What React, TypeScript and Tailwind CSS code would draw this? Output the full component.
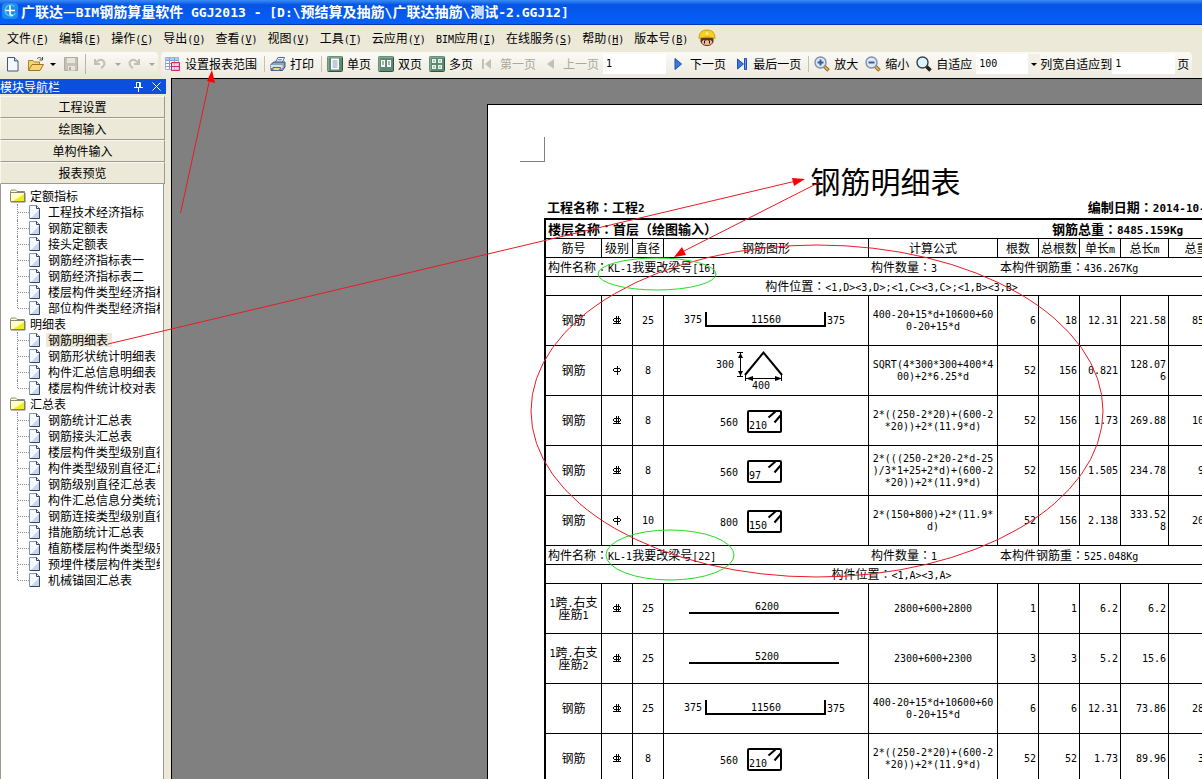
import React from 'react';

const LATIN = {
  sm: 'font-["DejaVu_Sans_Mono",monospace] text-[10px] leading-[0]',
  md: 'font-["DejaVu_Sans_Mono",monospace] text-[11px] leading-[0]',
  lg: 'font-["DejaVu_Sans_Mono",monospace] text-[13px] leading-[0]',
};

// Half-width runs are set in a mono face so two of them take one CJK cell
const Mixed: React.FC<{ text: string; size?: keyof typeof LATIN }> = ({ text, size = 'sm' }) => (
  <>
    {text.split(/([\x20-\x7e]+|：)/).map((part, i) => {
      if (!part) return null;
      if (part === '：') {
        return <span key={i} className='font-["Noto_Sans_CJK_TC",sans-serif]'>{part}</span>;
      }
      return /^[\x20-\x7e]+$/.test(part) ? (
        <span key={i} className={LATIN[size]}>{part}</span>
      ) : (
        part
      );
    })}
  </>
);

/* ---------- icons ---------- */

const AppIcon = () => (
  <svg width="16" height="16" viewBox="0 0 16 16" fill="none">
    <rect width="16" height="16" rx="4" fill="#1e8ce8" />
    <path d="M12.500 3.500A5.500 5.500 0 1 0 13.500 10" stroke="#5cc4f8" strokeWidth="1.400" />
    <path d="M8 2.500v8c0 1.500 1 2 3 2M3.500 7.500h9.500" stroke="#fff" strokeWidth="1.600" />
  </svg>
);

const NewIcon = () => (
  <svg width="16" height="16" viewBox="0 0 16 16">
    <path d="M2.500 1.500h7l3.500 3.500v10H2.500z" fill="#f4f8ff" stroke="#3f5878" />
    <path d="M9.500 1.500V5H13" fill="#c8d8ec" stroke="#3f5878" />
  </svg>
);

const OpenIcon = () => (
  <svg width="16" height="16" viewBox="0 0 16 16">
    <path d="M.5 14V4.500h4.500l1.500 1.500h5v3" fill="#f6d673" stroke="#a8822e" />
    <path d="M.5 14.500 4 8.500h11.500L12 14.500z" fill="#fbd670" stroke="#9a7428" />
    <path d="M9 3c1.500-2 3.500-2 4.500 0M14.500 1v3h-3" fill="none" stroke="#444" />
  </svg>
);

const SaveIcon = () => (
  <svg width="16" height="16" viewBox="0 0 16 16">
    <path d="M1.500 1.500h13v13h-13z" fill="#c6c3b6" stroke="#aeaba0" />
    <path d="M4 2h8v5H4z" fill="#e8e6dc" />
    <path d="M5 10h7v4.500H5z" fill="#e8e6dc" />
    <path d="M6 11h2v3H6z" fill="#aeaba0" />
  </svg>
);

const UndoIcon: React.FC<{ flip?: boolean }> = ({ flip }) => (
  <svg width="16" height="16" viewBox="0 0 16 16" fill="none" className={flip ? '-scale-x-100' : ''}>
    <path d="M3 3v5h5M3.500 7.500C6 3.500 9 3 11 4.500c2.500 2 1.500 6-2 7.500" stroke="#c2bfb3" strokeWidth="2" />
  </svg>
);

const Caret: React.FC<{ muted?: boolean }> = ({ muted }) => (
  <svg width="12" height="12" viewBox="0 0 12 12">
    <path d="M3 5h6L6 8z" fill={muted ? '#a8a598' : '#000'} />
  </svg>
);

const RangeIcon = () => (
  <svg width="16" height="16" viewBox="0 0 16 16">
    <path d="M.5 1.500h13v12H.5z" fill="#fff" stroke="#a4b0dc" />
    <path d="M1 2h12v2H1z" fill="#b8c8f0" />
    <path d="M.5 4.500h13M.5 7.500h13M.5 10.500h13M4.500 1.500v12M9.500 1.500v12" stroke="#8a9ccc" />
    <path d="M6.500 6.500h8v8h-8z" fill="#c4ccf0" fillOpacity=".7" stroke="#d42a4a" />
    <path d="M6.500 10.500h8" stroke="#d42a4a" />
  </svg>
);

const PrinterIcon = () => (
  <svg width="16" height="16" viewBox="0 0 16 16">
    <path d="M5.500 6 8 1.500h6.500L12.500 6" fill="#fff" stroke="#4c6c9c" />
    <path d="M1 8.500 3.500 6h11.500v5l-2.500 3.500H1z" fill="#8fa4bc" stroke="#3c5070" />
    <path d="M1 9h11.500v3H1z" fill="#d4e0ec" />
    <path d="M3 11.500h7.500l-1 3H3z" fill="#f4d878" stroke="#54688a" />
    <path d="M8 3.500h4M7.500 5h4" stroke="#7c9cc8" />
  </svg>
);

const PageFrame: React.FC<{ children: React.ReactNode }> = ({ children }) => (
  <svg width="16" height="16" viewBox="0 0 16 16">
    <rect x=".5" y=".5" width="15" height="15" rx="1" fill="#5d8a70" stroke="#2f5440" />
    <path d="M1 15V1h14" fill="none" stroke="#a4c8b2" />
    {children}
  </svg>
);

const SinglePageIcon = () => (
  <PageFrame>
    <path d="M4 2.500h8v11H4z" fill="#fff" />
    <path d="M5.500 5h5M5.500 7h5M5.500 9h5M5.500 11h5" stroke="#8898b8" />
  </PageFrame>
);

const DoublePageIcon = () => (
  <PageFrame>
    <path d="M3 4h4v7H3zM9 4h4v7H9z" fill="#fff" />
    <path d="M4 6h2M4 8h2M10 6h2M10 8h2" stroke="#4a6a58" />
  </PageFrame>
);

const MultiPageIcon = () => (
  <PageFrame>
    <path d="M3 3h4v4H3zM9 3h4v4H9zM3 9h4v4H3zM9 9h4v4H9z" fill="#e8f4ec" />
    <path d="M4 5h2M10 5h2M4 11h2M10 11h2" stroke="#7c9c88" />
  </PageFrame>
);

const FirstIcon = () => (
  <svg width="16" height="16" viewBox="0 0 16 16">
    <path d="M2 3h2v10H2zM11 3v10L5 8z" fill="#c4c1b4" />
  </svg>
);

const PrevIcon = () => (
  <svg width="16" height="16" viewBox="0 0 16 16">
    <path d="M11 3v10L4 8z" fill="#c4c1b4" />
  </svg>
);

const NextIcon = () => (
  <svg width="16" height="16" viewBox="0 0 16 16">
    <path d="M5 2.500v11L11.500 8z" fill="#3a7ae0" stroke="#1c4cae" />
  </svg>
);

const LastIcon = () => (
  <svg width="16" height="16" viewBox="0 0 16 16">
    <path d="M4.500 3v10L10.500 8z" fill="#3a7ae0" stroke="#1c4cae" />
    <path d="M11.500 2.500h2v11h-2z" fill="#6ca4f0" stroke="#1c4cae" />
  </svg>
);

const LensIcon: React.FC<{ mark?: 'plus' | 'minus' }> = ({ mark }) => (
  <svg width="16" height="16" viewBox="0 0 16 16">
    <path d="m10 10 4.500 4.500" stroke={mark ? '#8a6a24' : '#222'} strokeWidth="3.500" />
    {mark && <path d="m10.500 10.500 3.500 3.500" stroke="#e8c050" strokeWidth="1.500" />}
    <circle cx="6.500" cy="6.500" r="5.500" fill={mark ? '#dce8f8' : '#d8f4fc'} stroke={mark ? '#8090a8' : '#3a4048'} strokeWidth="1.400" />
    {mark && <path d="M3.500 6.500h6" stroke="#3c5ca0" strokeWidth="2" />}
    {mark === 'plus' && <path d="M6.500 3.500v6" stroke="#3c5ca0" strokeWidth="2" />}
  </svg>
);

const HelmetIcon = () => (
  <svg width="18" height="18" viewBox="0 0 18 18">
    <path d="M3.500 9h11v4c0 2-2 3.500-5.500 3.500S3.500 15 3.500 13z" fill="#f0bc94" stroke="#5c3420" />
    <path d="M2.500 9h13v4.500L12.500 11l-1.500 1-2-1-2 1-1.500-1-3 2.500z" fill="#5c3420" />
    <path d="M1 9.500C1 4 3.500 1 9 1s8 3 8 8.500c-5-2-11-2-16 0z" fill="#f8d020" stroke="#c8a018" />
    <path d="M6.500 12v2.500M11.500 12v2.500" stroke="#20100c" />
    <circle cx="9" cy="4.500" r="1.300" fill="#fff0a0" />
  </svg>
);

const FolderIcon = () => (
  <svg width="16" height="14" viewBox="0 0 16 14">
    <path d="M.5 12.500v-10l1-1.500h4l1.500 1.500h7.500v10z" fill="#ffffc8" stroke="#8a8878" />
    <path d="M3 12 14 5v7z" fill="#f4ec20" />
    <path d="M.5 3.500h14" stroke="#8a8878" />
    <path d="M15 4v9H1" fill="none" stroke="#77756a" />
  </svg>
);

const DocIcon = () => (
  <svg width="12" height="14" viewBox="0 0 12 14">
    <path d="M.5.5h7l3 3v10H.5z" fill="#f6f9ff" stroke="#8496ae" />
    <path d="M2 13 10 5v8z" fill="#c8d6e8" />
    <path d="M7.500.5v3h3v10H1" fill="none" stroke="#2c4468" />
  </svg>
);

const PinIcon = () => (
  <svg width="9" height="10" viewBox="0 0 9 10" fill="none">
    <path d="M2.500.5h4v5h-4zM0 5.500h9M4.500 6v4M5.500 1v4" stroke="#fff" />
  </svg>
);

const CloseIcon = () => (
  <svg width="9" height="9" viewBox="0 0 9 9">
    <path d="m.5.5 8 8M8.500.5l-8 8" stroke="#fff" />
  </svg>
);

/* ---------- data ---------- */

const MENUS: [string, string][] = [
  ['文件', 'F'],
  ['编辑', 'E'],
  ['操作', 'C'],
  ['导出', 'O'],
  ['查看', 'V'],
  ['视图', 'V'],
  ['工具', 'T'],
  ['云应用', 'Y'],
  ['BIM应用', 'I'],
  ['在线服务', 'S'],
  ['帮助', 'H'],
  ['版本号', 'B'],
];

const MODULES = ['工程设置', '绘图输入', '单构件输入', '报表预览'];

const TREE = [
  {
    name: '定额指标',
    items: [
      '工程技术经济指标',
      '钢筋定额表',
      '接头定额表',
      '钢筋经济指标表一',
      '钢筋经济指标表二',
      '楼层构件类型经济指标表',
      '部位构件类型经济指标表',
    ],
  },
  {
    name: '明细表',
    items: ['钢筋明细表', '钢筋形状统计明细表', '构件汇总信息明细表', '楼层构件统计校对表'],
  },
  {
    name: '汇总表',
    items: [
      '钢筋统计汇总表',
      '钢筋接头汇总表',
      '楼层构件类型级别直径汇总表',
      '构件类型级别直径汇总表',
      '钢筋级别直径汇总表',
      '构件汇总信息分类统计表',
      '钢筋连接类型级别直径汇总表',
      '措施筋统计汇总表',
      '植筋楼层构件类型级别直径汇总表',
      '预埋件楼层构件类型统计表',
      '机械锚固汇总表',
    ],
  },
];

type Shape =
  | { kind: 'hook'; side: string; length: string }
  | { kind: 'line'; length: string }
  | { kind: 'triangle'; height: string; width: string }
  | { kind: 'stirrup'; height: string; width: string };

interface Bar {
  name: string;
  grade: 1 | 3;
  dia: string;
  shape: Shape;
  formula: string;
  nums: string[];
}

interface Member {
  name: string;
  count: string;
  weight: string;
  position: string;
  bars: Bar[];
}

const MEMBERS: Member[] = [
  {
    name: 'KL-1我要改梁号[16]',
    count: '3',
    weight: '436.267Kg',
    position: '<1,D><3,D>;<1,C><3,C>;<1,B><3,B>',
    bars: [
      { name: '钢筋', grade: 3, dia: '25', shape: { kind: 'hook', side: '375', length: '11560' }, formula: '400-20+15*d+10600+60\n0-20+15*d', nums: ['6', '18', '12.31', '221.58', '853.083'] },
      { name: '钢筋', grade: 1, dia: '8', shape: { kind: 'triangle', height: '300', width: '400' }, formula: 'SQRT(4*300*300+400*4\n00)+2*6.25*d', nums: ['52', '156', '0.821', '128.07\n6', '50.59'] },
      { name: '钢筋', grade: 3, dia: '8', shape: { kind: 'stirrup', height: '560', width: '210' }, formula: '2*((250-2*20)+(600-2\n*20))+2*(11.9*d)', nums: ['52', '156', '1.73', '269.88', '106.603'] },
      { name: '钢筋', grade: 3, dia: '8', shape: { kind: 'stirrup', height: '560', width: '97' }, formula: '2*(((250-2*20-2*d-25\n)/3*1+25+2*d)+(600-2\n*20))+2*(11.9*d)', nums: ['52', '156', '1.505', '234.78', '92.738'] },
      { name: '钢筋', grade: 1, dia: '10', shape: { kind: 'stirrup', height: '800', width: '150' }, formula: '2*(150+800)+2*(11.9*\nd)', nums: ['52', '156', '2.138', '333.52\n8', '205.787'] },
    ],
  },
  {
    name: 'KL-1我要改梁号[22]',
    count: '1',
    weight: '525.048Kg',
    position: '<1,A><3,A>',
    bars: [
      { name: '1跨.右支\n座筋1', grade: 3, dia: '25', shape: { kind: 'line', length: '6200' }, formula: '2800+600+2800', nums: ['1', '1', '6.2', '6.2', '23.87'] },
      { name: '1跨.右支\n座筋2', grade: 3, dia: '25', shape: { kind: 'line', length: '5200' }, formula: '2300+600+2300', nums: ['3', '3', '5.2', '15.6', '60.06'] },
      { name: '钢筋', grade: 3, dia: '25', shape: { kind: 'hook', side: '375', length: '11560' }, formula: '400-20+15*d+10600+60\n0-20+15*d', nums: ['6', '6', '12.31', '73.86', '284.361'] },
      { name: '钢筋', grade: 3, dia: '8', shape: { kind: 'stirrup', height: '560', width: '210' }, formula: '2*((250-2*20)+(600-2\n*20))+2*(11.9*d)', nums: ['52', '52', '1.73', '89.96', '35.534'] },
    ],
  },
];

/* ---------- report parts ---------- */

const GradeMark: React.FC<{ grade: 1 | 3 }> = ({ grade }) => (
  <svg width="10" height="9" viewBox="0 0 10 9" fill="none" stroke="#000" className="mx-auto">
    <path d="M2 2.500h6M2 5.500h6M1.500 3v2M8.500 3v2" />
    {grade === 1 ? <path d="M5.500 0v9" /> : <path d="M4.500 0v8M6.500 0v8M1 7.500h8" />}
  </svg>
);

const BarShape: React.FC<{ shape: Shape }> = ({ shape }) => (
  <svg
    width="204"
    height="49"
    viewBox="0 0 204 49"
    fill="none"
    stroke="#000"
    className='font-["DejaVu_Sans_Mono",monospace] text-[10px] [&_text]:fill-black [&_text]:stroke-none'
  >
    {shape.kind === 'hook' && (
      <>
        <path d="M42 16v14h119V16" strokeWidth="2" />
        <text x="20" y="27">{shape.side}</text>
        <text x="87" y="27">{shape.length}</text>
        <text x="163" y="28">{shape.side}</text>
      </>
    )}
    {shape.kind === 'line' && (
      <>
        <path d="M25 29h150" strokeWidth="2" />
        <text x="91" y="26">{shape.length}</text>
      </>
    )}
    {shape.kind === 'triangle' && (
      <>
        <path d="M81 29 99.500 6.500 118 29" strokeWidth="2" />
        <path d="M73 6.500h6M73 30.500h6M76.500 7v23M81.500 29v6M117.500 29v6M82 32.500h36" />
        <path d="m76.500 7 2.500 5h-5zM76.500 30l2.500-5h-5zM82 32.500l7-2.500v5zM118 32.500l-7-2.500v5z" fill="#000" stroke="none" />
        <text x="52" y="22">{shape.height}</text>
        <text x="88" y="43">{shape.width}</text>
      </>
    )}
    {shape.kind === 'stirrup' && (
      <>
        <rect x="84" y="15" width="33" height="21" rx="1" strokeWidth="2" />
        <path d="m104.500 21.500 7-6M110.500 26.500l6-7" strokeWidth="2" />
        <text x="56" y="30">{shape.height}</text>
        <text x="85" y="33">{shape.width}</text>
      </>
    )}
  </svg>
);

const HEAD = ['筋号', '级别', '直径', '钢筋图形', '计算公式', '根数', '总根数', '单长m', '总长m', '总重kg'];

const ReportTable = () => (
  <table className="w-[693px] table-fixed border-separate border-spacing-0 border-l-2 border-t-2 border-black text-center leading-3 [&_td]:border-b [&_td]:border-black [&_td]:p-0 [&_th]:border-b [&_th]:border-r [&_th]:border-black [&_th]:p-0 [&_th]:font-normal">
    <colgroup>
      <col className="w-[56px]" />
      <col className="w-[31px]" />
      <col className="w-[31px]" />
      <col className="w-[205px]" />
      <col className="w-[129px]" />
      <col className="w-[41px]" />
      <col className="w-[41px]" />
      <col className="w-[41px]" />
      <col className="w-[48px]" />
      <col className="w-[68px]" />
    </colgroup>
    <thead>
      <tr className="h-[19px] text-[13px] font-bold">
        <td colSpan={5} className="text-left">
          <div className="pl-0.5"><Mixed size="md" text="楼层名称：首层（绘图输入）" /></div>
        </td>
        <td colSpan={5}><Mixed size="md" text="钢筋总重：8485.159Kg" /></td>
      </tr>
      <tr className="h-[19px]">
        {HEAD.map((h) => (
          <th key={h} className="whitespace-nowrap"><Mixed text={h} /></th>
        ))}
      </tr>
    </thead>
    {MEMBERS.map((m) => (
      <tbody key={m.name}>
        <tr className="h-[19px] text-left">
          <td colSpan={4}><div className="pl-0.5"><Mixed text={`构件名称：${m.name}`} /></div></td>
          <td><div className="pl-0.5"><Mixed text={`构件数量：${m.count}`} /></div></td>
          <td colSpan={5}><div className="pl-0.5"><Mixed text={`本构件钢筋重：${m.weight}`} /></div></td>
        </tr>
        <tr className="h-[19px]">
          <td colSpan={10}><Mixed text={`构件位置：${m.position}`} /></td>
        </tr>
        {m.bars.map((b, i) => (
          <tr key={i} className="h-[50px] whitespace-pre [&_td]:border-r">
            <td><div className="pb-0.5"><Mixed text={b.name} /></div></td>
            <td><GradeMark grade={b.grade} /></td>
            <td className='font-["DejaVu_Sans_Mono",monospace] text-[10px]'>{b.dia}</td>
            <td><BarShape shape={b.shape} /></td>
            <td className='font-["DejaVu_Sans_Mono",monospace] text-[10px]'>{b.formula}</td>
            {b.nums.map((n, j) => (
              <td key={j} className='text-right font-["DejaVu_Sans_Mono",monospace] text-[10px]'>
                <div className="pr-0.5">{n}</div>
              </td>
            ))}
          </tr>
        ))}
      </tbody>
    ))}
  </table>
);

/* ---------- window chrome ---------- */

const ToolButton: React.FC<{ icon: React.ReactNode; label: string; disabled?: boolean }> = ({ icon, label, disabled }) => (
  <button disabled={disabled} className="flex shrink-0 items-center gap-1 whitespace-nowrap disabled:text-[#aca899]">
    {icon}
    {label}
  </button>
);

const Sep = () => <span className="ml-[7px] mr-[5px] h-4 w-px shrink-0 bg-[#c5c2b2]" />;

const Toolbar = () => (
  <div className="flex h-[26px] gap-[3px] pr-[10px]">
    <div className="flex shrink-0 items-center rounded-r bg-linear-to-b from-[#fbfaf6] to-[#e9e6d8] pb-[3px] pl-[5px]">
      <button aria-label="新建" className="mr-[7px]"><NewIcon /></button>
      <button aria-label="打开" className="mr-1 flex items-center gap-[3px]"><OpenIcon /><Caret /></button>
      <button aria-label="保存" disabled><SaveIcon /></button>
      <span className="mx-[6px] h-5 w-px bg-[#b8b5a6]" />
      <button aria-label="撤销" disabled className="mr-0.5 flex items-center gap-1"><UndoIcon /><Caret muted /></button>
      <button aria-label="重做" disabled className="flex items-center gap-1"><UndoIcon flip /><Caret muted /></button>
    </div>
    <div className="flex min-w-0 flex-1 items-center rounded bg-linear-to-b from-[#fbfaf6] to-[#eceade] pb-[3px] pl-1">
      <ToolButton icon={<RangeIcon />} label="设置报表范围" />
      <Sep />
      <ToolButton icon={<PrinterIcon />} label="打印" />
      <Sep />
      <div className="flex shrink-0 gap-[7px]">
        <ToolButton icon={<SinglePageIcon />} label="单页" />
        <ToolButton icon={<DoublePageIcon />} label="双页" />
        <ToolButton icon={<MultiPageIcon />} label="多页" />
        <ToolButton icon={<FirstIcon />} label="第一页" disabled />
        <ToolButton icon={<PrevIcon />} label="上一页" disabled />
      </div>
      <input
        aria-label="页码"
        defaultValue="1"
        className='mx-1 h-5 w-[63px] shrink-0 bg-white px-[3px] font-["DejaVu_Sans_Mono",monospace] text-[10px] outline-none'
      />
      <div className="flex shrink-0 gap-[7px]">
        <ToolButton icon={<NextIcon />} label="下一页" />
        <ToolButton icon={<LastIcon />} label="最后一页" />
      </div>
      <Sep />
      <div className="flex shrink-0 gap-[7px]">
        <ToolButton icon={<LensIcon mark="plus" />} label="放大" />
        <ToolButton icon={<LensIcon mark="minus" />} label="缩小" />
        <ToolButton icon={<LensIcon />} label="自适应" />
      </div>
      <div className="relative ml-1 shrink-0">
        <select
          aria-label="缩放比例"
          defaultValue="100"
          className='block h-5 w-[64px] appearance-none bg-white px-[3px] font-["DejaVu_Sans_Mono",monospace] text-[10px] outline-none'
        >
          <option>50</option>
          <option>100</option>
          <option>200</option>
        </select>
        <span className="pointer-events-none absolute inset-y-0 right-0 flex items-center bg-[#f1efe6]"><Caret /></span>
      </div>
      <label htmlFor="fit" className="shrink-0 whitespace-nowrap">列宽自适应到</label>
      <input
        id="fit"
        defaultValue="1"
        className='mr-0.5 h-5 w-[63px] shrink-0 bg-white px-[3px] font-["DejaVu_Sans_Mono",monospace] text-[10px] outline-none'
      />
      <span className="shrink-0">页</span>
    </div>
  </div>
);

const Sidebar = () => (
  <aside className="flex w-[171px] shrink-0 flex-col pt-px pr-[5px]">
    <div className="flex h-[15px] shrink-0 items-center bg-[#0a50dc] pr-[5px] text-white">
      <h2 className="flex-1">模块导航栏</h2>
      <button aria-label="固定" className="mr-[9px]"><PinIcon /></button>
      <button aria-label="关闭"><CloseIcon /></button>
    </div>
    <div className="mt-0.5 flex flex-col pr-px">
      {MODULES.map((m) => (
        <button key={m} className="h-[22px] border border-[#f8f6ee] border-b-[#9c9a8c] border-r-[#9c9a8c]">
          {m}
        </button>
      ))}
    </div>
    <div className="mr-0.5 flex-1 overflow-hidden border-l border-r border-[#9c9a8c] bg-white pt-1 pr-[3px]">
      {TREE.map((g) => (
        <div key={g.name} className="overflow-hidden">
          <button className="flex h-4 items-center gap-1 pl-[9px]">
            <FolderIcon />
            {g.name}
          </button>
          <ul>
            {g.items.map((item, i) => (
              <li key={item} className="flex h-4 items-center pl-4">
                <span className={`${i === g.items.length - 1 ? 'h-2 self-start' : 'h-4'} border-l border-dotted border-[#8c8c8c]`} />
                <span className="w-[11px] shrink-0 border-t border-dotted border-[#8c8c8c]" />
                <button className="flex items-center whitespace-nowrap">
                  <DocIcon />
                  <span className={`ml-[5px] px-0.5 py-px ${item === '钢筋明细表' ? 'bg-[#ece9d8] pr-1' : ''}`}>{item}</span>
                </button>
              </li>
            ))}
          </ul>
        </div>
      ))}
    </div>
  </aside>
);

// Hand-drawn notes laid over the whole window
const Annotations = () => (
  <svg width="1202" height="779" viewBox="0 0 1202 779" fill="none" className="pointer-events-none absolute left-0 top-0">
    <g stroke="#e81c24">
      <path d="M180.500 213 210 78M108 344 796 181M820 182 684 251" />
      <ellipse cx="817" cy="411" rx="286" ry="166" />
    </g>
    <g fill="#f00">
      <path d="m212 70 3 13-8-2z" />
      <path d="m805 179-11 7-2-8z" />
      <path d="m674 257 8-10 4 8z" />
    </g>
    <g stroke="#22dc22">
      <ellipse cx="657" cy="274" rx="59" ry="16" />
      <ellipse cx="670" cy="555" rx="64" ry="25" />
    </g>
  </svg>
);

const App = () => (
  <div className='relative flex h-screen flex-col overflow-hidden bg-[#ece9d8] font-["Noto_Sans_CJK_SC",sans-serif] text-[12px] leading-3 text-black'>
    <header className="flex h-[25px] shrink-0 items-center gap-[3px] bg-linear-to-b from-[#3a8cf4] via-[#0554e4] via-20% to-[#0560fa] border-b border-[#0838a8] pl-0.5 pb-0.5 text-white">
      <AppIcon />
      <h1 className="whitespace-pre text-[14px] font-bold leading-none">
        <Mixed size="lg" text="广联达—BIM钢筋算量软件 GGJ2013 - [D:\预结算及抽筋\广联达抽筋\测试-2.GGJ12]" />
      </h1>
    </header>

    <nav className="flex h-[27px] shrink-0 items-center gap-[10px] pb-0.5 pl-[7px]">
      {MENUS.map(([name, key]) => (
        <button key={name} className="whitespace-nowrap">
          <Mixed text={name} />
          <span className='font-["DejaVu_Sans_Mono",monospace] text-[10px] leading-[0]'>
            (<u>{key}</u>)
          </span>
        </button>
      ))}
      <HelmetIcon />
    </nav>

    <Toolbar />

    <div className="flex min-h-0 flex-1">
      <Sidebar />
      <main className="flex min-w-0 flex-1 items-start overflow-hidden border-l border-t border-black bg-[#808080] pl-[315px] pt-[25px]">
        <div className="w-[807px] shrink-0 border border-black bg-white pr-14 pb-14">
          <div className="ml-8 mt-8 h-[25px] w-[25px] border-b border-r border-[#808080]" />
          <div className="ml-14">
            <h2 className="flex h-9 items-center justify-center pr-[10px] text-[30px] leading-none">钢筋明细表</h2>
            <div className="flex h-5 items-center justify-between pb-0.5 pl-[3px] pr-[18px] text-[13px] font-bold">
              <span><Mixed size="md" text="工程名称：工程2" /></span>
              <span><Mixed size="md" text="编制日期：2014-10-24" /></span>
            </div>
            <ReportTable />
          </div>
        </div>
      </main>
    </div>

    <Annotations />
  </div>
);

export default App;
